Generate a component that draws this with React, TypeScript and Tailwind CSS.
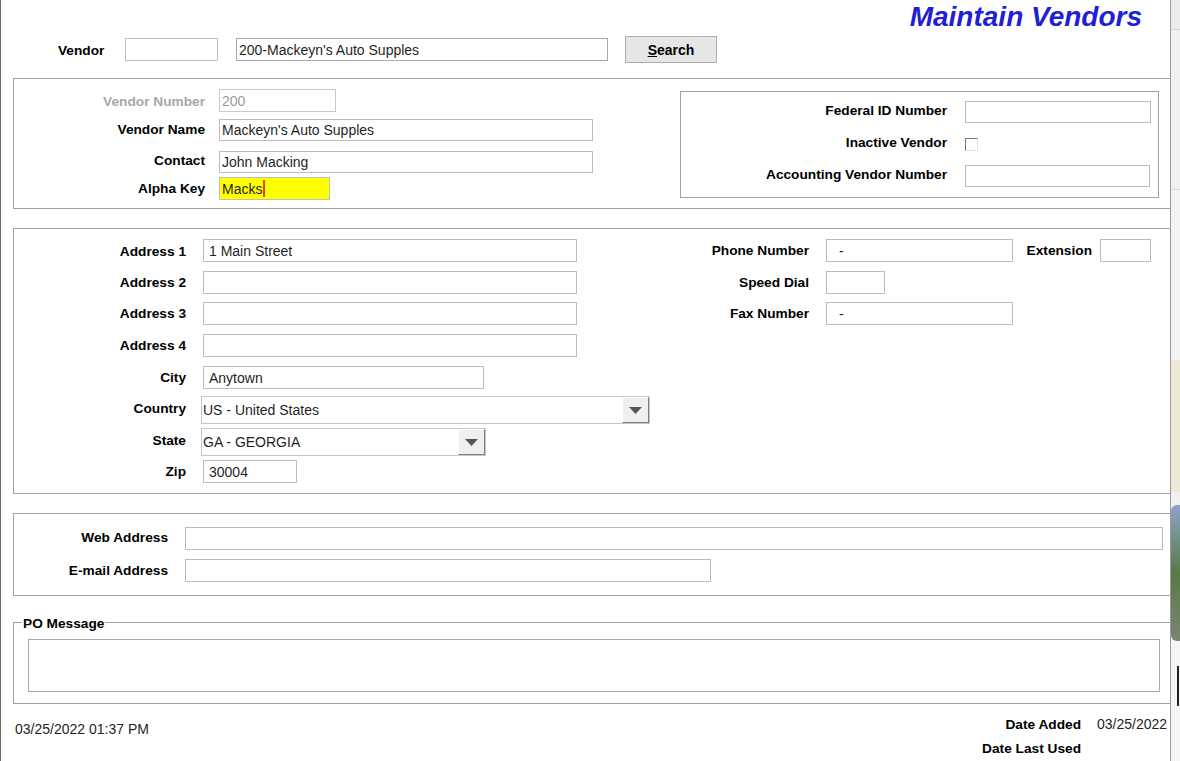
import React from "react";

function Field({ className = "", bg = "bg-white", children }: { className?: string; bg?: string; children?: React.ReactNode }) {
  return (
    <div className={"h-full border border-[#bdbdbd] flex items-center text-[14px] leading-none whitespace-nowrap overflow-hidden " + bg + " " + className}>
      {children}
    </div>
  );
}

function Label({ className = "", v = "pt-[1px]", children }: { className?: string; v?: string; children?: React.ReactNode }) {
  return <div className={"text-right text-[13.7px] font-bold leading-[18px] whitespace-nowrap " + v + " " + className}>{children}</div>;
}

function Select({ className = "", text }: { className?: string; text: string }) {
  return (
    <div className={"h-full border border-[#c6c6c6] bg-white flex items-stretch " + className}>
      <div className="flex-1 flex items-center pl-[1px] text-[14px] leading-none whitespace-nowrap">{text}</div>
      <div className="w-[27px] bg-[#efefef] border-t border-l border-t-[#ffffff] border-l-[#ffffff] border-r border-b border-r-[#7f7f7f] border-b-[#7f7f7f] flex items-center justify-center">
        <svg width="13" height="7" viewBox="0 0 13 7">
          <polygon points="0,0 13,0 6.5,7" fill="#555555" />
        </svg>
      </div>
    </div>
  );
}

export default function App() {
  return (
    <div className="w-[1180px] h-[761px] flex bg-white overflow-hidden font-['Liberation_Sans',Arial,sans-serif] text-[#1f1f26]">
      <div className="w-[1171px] h-full shrink-0 border-l border-l-[#6a6a6a] border-r border-r-[#9a9a9a] flex flex-col">
        {/* Title */}
        <div className="h-[36px] pt-[1px] pr-[28px] text-right">
          <span className="text-[28px] leading-[32px] font-bold italic text-[#1f1fd6]">Maintain Vendors</span>
        </div>

        {/* Vendor search row */}
        <div className="h-[27px] flex items-center pl-[57px]">
          <Label className="w-[67px] !text-left text-black" v="pt-[3px]">Vendor</Label>
          <div className="w-[93px] h-[23px] border border-[#c0c0c0]" />
          <div className="ml-[18px] w-[372px] h-[23px] border border-[#a8a8a8] flex items-center pl-[2px] text-[14px] leading-none whitespace-nowrap">
            200-Mackeyn's Auto Supples
          </div>
          <div className="ml-[17px] w-[92px] h-[27px] border border-[#adadad] bg-[#e6e6e6] flex items-center justify-center text-[14px] font-bold text-black pt-[1px]">
            <span className="underline">S</span>earch
          </div>
        </div>

        {/* Group 1 */}
        <div className="ml-[12px] mt-[15px] h-[131px] border-t border-b border-l border-[#a0a0a0] flex">
          <div className="w-[666px] flex flex-col">
            <div className="mt-[10px] h-[23px] flex items-center">
              <Label className="w-[191px] text-[#a8a8a8]" v="pt-[3px]">Vendor Number</Label>
              <Field className="ml-[14px] w-[117px] pl-[2px] text-[#9a9a9a] border-[#c8c8c8]">200</Field>
            </div>
            <div className="mt-[7px] h-[22px] flex items-center">
              <Label className="w-[191px] text-black" v="pb-[1px]">Vendor Name</Label>
              <Field className="ml-[14px] w-[374px] pl-[2px]">Mackeyn's Auto Supples</Field>
            </div>
            <div className="mt-[10px] h-[22px] flex items-center">
              <Label className="w-[191px] text-black" v="pb-[3px]">Contact</Label>
              <Field className="ml-[14px] w-[374px] pl-[2px]">John Macking</Field>
            </div>
            <div className="mt-[4px] h-[23px] flex items-center">
              <Label className="w-[191px] text-black">Alpha Key</Label>
              <Field className="ml-[14px] w-[111px] pl-[2px]" bg="bg-[#ffff00]">
                Macks
                <span className="inline-block w-[2px] h-[17px] bg-[#e2401c] ml-[1px]" />
              </Field>
            </div>
          </div>
          <div className="mt-[12px] w-[479px] h-[107px] border border-[#a0a0a0] flex flex-col">
            <div className="mt-[9px] h-[22px] flex items-center">
              <Label className="w-[266px] text-black" v="pb-[3px]">Federal ID Number</Label>
              <Field className="ml-[18px] w-[186px]" />
            </div>
            <div className="mt-[10px] h-[22px] flex items-center">
              <Label className="w-[266px] text-black" v="pb-[3px]">Inactive Vendor</Label>
              <div className="ml-[18px] w-[13px] h-[13px] bg-white border border-t-[#777777] border-l-[#777777] border-r-[#e0e0e0] border-b-[#e0e0e0]" />
            </div>
            <div className="mt-[10px] h-[22px] flex items-center">
              <Label className="w-[266px] text-black" v="pb-[3px]">Accounting Vendor Number</Label>
              <Field className="ml-[18px] w-[185px]" />
            </div>
          </div>
        </div>

        {/* Group 2 - address */}
        <div className="ml-[12px] mt-[19px] h-[266px] border-t border-b border-l border-[#a0a0a0] flex">
          <div className="w-[666px] flex flex-col">
            <div className="mt-[10px] h-[23px] flex items-center">
              <Label className="w-[172px] text-black" v="pt-[3px]">Address 1</Label>
              <Field className="ml-[17px] w-[374px] pl-[5px]">1 Main Street</Field>
            </div>
            <div className="mt-[9px] h-[23px] flex items-center">
              <Label className="w-[172px] text-black">Address 2</Label>
              <Field className="ml-[17px] w-[374px] pl-[5px]" />
            </div>
            <div className="mt-[8px] h-[23px] flex items-center">
              <Label className="w-[172px] text-black">Address 3</Label>
              <Field className="ml-[17px] w-[374px] pl-[5px]" />
            </div>
            <div className="mt-[9px] h-[23px] flex items-center">
              <Label className="w-[172px] text-black">Address 4</Label>
              <Field className="ml-[17px] w-[374px] pl-[5px]" />
            </div>
            <div className="mt-[9px] h-[23px] flex items-center">
              <Label className="w-[172px] text-black">City</Label>
              <Field className="ml-[17px] w-[281px] pl-[5px]">Anytown</Field>
            </div>
            <div className="mt-[7px] h-[28px] flex items-center">
              <Label className="w-[172px] text-black" v="pb-[3px]">Country</Label>
              <Select className="ml-[15px] w-[449px]" text="US - United States" />
            </div>
            <div className="mt-[4px] h-[28px] flex items-center">
              <Label className="w-[172px] text-black" v="pb-[3px]">State</Label>
              <Select className="ml-[15px] w-[285px]" text="GA - GEORGIA" />
            </div>
            <div className="mt-[4px] h-[23px] flex items-center">
              <Label className="w-[172px] text-black">Zip</Label>
              <Field className="ml-[17px] w-[94px] pl-[5px]">30004</Field>
            </div>
          </div>
          <div className="flex flex-col">
            <div className="mt-[10px] h-[23px] flex items-center">
              <Label className="w-[129px] text-black">Phone Number</Label>
              <Field className="ml-[17px] w-[187px] pl-[12px]">-</Field>
              <Label className="w-[79px] text-black">Extension</Label>
              <Field className="ml-[8px] w-[51px]" />
            </div>
            <div className="mt-[9px] h-[23px] flex items-center">
              <Label className="w-[129px] text-black">Speed Dial</Label>
              <Field className="ml-[17px] w-[59px]" />
            </div>
            <div className="mt-[8px] h-[23px] flex items-center">
              <Label className="w-[129px] text-black">Fax Number</Label>
              <Field className="ml-[17px] w-[187px] pl-[12px]">-</Field>
            </div>
          </div>
        </div>

        {/* Group 3 - web */}
        <div className="ml-[12px] mt-[19px] h-[83px] border-t border-b border-l border-[#a0a0a0] flex flex-col">
          <div className="mt-[13px] h-[23px] flex items-center">
            <Label className="w-[154px] text-black" v="pb-[1px]">Web Address</Label>
            <Field className="ml-[17px] w-[978px]" />
          </div>
          <div className="mt-[9px] h-[23px] flex items-center">
            <Label className="w-[154px] text-black">E-mail Address</Label>
            <Field className="ml-[17px] w-[526px]" />
          </div>
        </div>

        {/* PO Message */}
        <div className="ml-[12px] mt-[26px] h-[82px] relative border-t border-b border-l border-[#a0a0a0]">
          <div className="absolute left-[8px] top-[-8px] bg-white px-[1px] text-[13.7px] font-bold leading-[18px] text-black">PO Message</div>
          <div className="mt-[16px] ml-[14px] w-[1132px] h-[53px] border border-[#a8a8a8]" />
        </div>

        {/* Footer */}
        <div className="flex">
          <div className="pl-[14px] mt-[15px] h-[20px] leading-[20px] text-[14px]">03/25/2022 01:37 PM</div>
          <div className="ml-auto flex flex-col">
            <div className="mt-[10px] h-[20px] flex items-center">
              <Label className="w-[110px] text-black" v="pt-[1px]">Date Added</Label>
              <div className="ml-[16px] w-[73px] text-[14px] whitespace-nowrap">03/25/2022</div>
            </div>
            <div className="mt-[4px] h-[20px] flex items-center">
              <Label className="w-[110px] text-black" v="pt-[1px]">Date Last Used</Label>
              <div className="ml-[16px] w-[73px]" />
            </div>
          </div>
        </div>
      </div>

      {/* Desktop strip beyond window edge */}
      <div className="w-[9px] h-full flex flex-col bg-[#f2f2f2]">
        <div className="h-[30px] bg-[#ececec] border-b border-[#d4d4d4]" />
        <div className="h-[160px] bg-[#f0f0f0] border-b border-[#dadada]" />
        <div className="h-[170px] bg-[#f3f3f3]" />
        <div className="h-[132px] bg-[#ece9d6]" />
        <div className="h-[13px] bg-[#f0f0f0]" />
        <div className="h-[136px] rounded-l-[6px] bg-gradient-to-b from-[#8da3c9] via-[#587a45] to-[#7a8475]" />
        <div className="h-[25px] bg-[#f5f5f5]" />
        <div className="h-[40px] bg-[#f5f5f5] flex justify-end">
          <div className="w-[2px] h-full bg-[#222222] mr-[1px]" />
        </div>
        <div className="flex-1 bg-[#f5f5f5]" />
      </div>
    </div>
  );
}
